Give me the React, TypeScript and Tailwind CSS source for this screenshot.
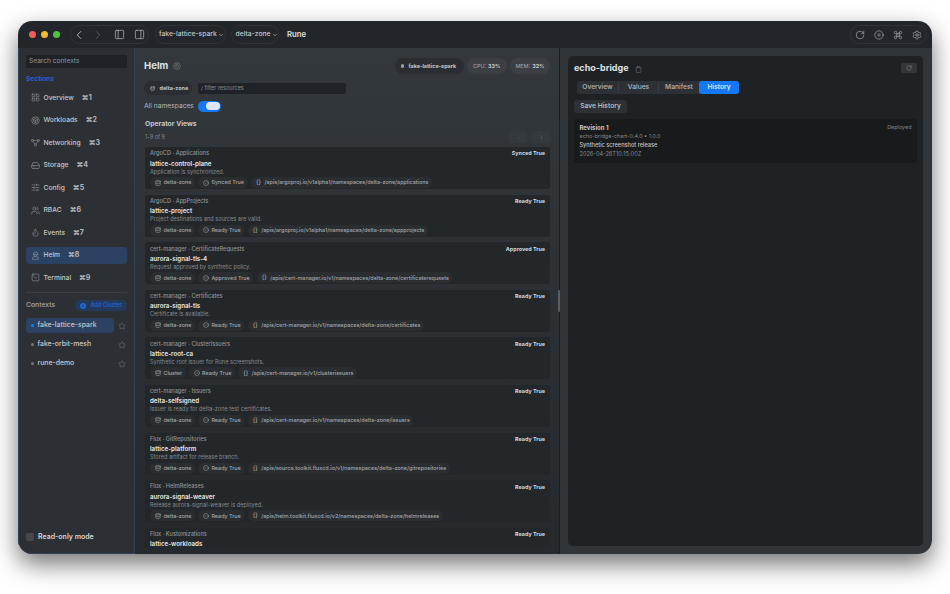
import {
  ChevronDown,
  ChevronLeft,
  ChevronRight,
  CircleCheck,
  CirclePause,
  Clipboard,
  Command,
  Database,
  Flame,
  HardDrive,
  LayoutGrid,
  PanelLeft,
  PanelRight,
  Plus,
  RotateCw,
  Settings,
  SlidersHorizontal,
  SquareTerminal,
  Star,
  Users,
} from "lucide-react";

type IconProps = { className?: string; strokeWidth?: number };

function WorkloadsIcon({ className, strokeWidth }: IconProps) {
  return (
    <svg viewBox="0 0 24 24" fill="none" stroke="currentColor" strokeWidth={strokeWidth} className={className}>
      <circle cx="12" cy="12" r="10" />
      <path d="M12 6l5.5 3v6L12 18l-5.5-3V9zM6.5 9l5.5 3 5.5-3M12 12v6" />
    </svg>
  );
}

function NetworkingIcon({ className, strokeWidth }: IconProps) {
  return (
    <svg viewBox="0 0 24 24" fill="none" stroke="currentColor" strokeWidth={strokeWidth} className={className}>
      <rect x="1.5" y="4" width="5" height="5" rx="1" />
      <rect x="17.5" y="4" width="5" height="5" rx="1" />
      <rect x="9.5" y="16" width="5" height="5" rx="1" />
      <path d="M6.5 6.5h11M5 9l6 7M19 9l-6 7" />
    </svg>
  );
}

function HelmIcon({ className, strokeWidth }: IconProps) {
  return (
    <svg viewBox="0 0 24 24" fill="none" stroke="currentColor" strokeWidth={strokeWidth} className={className}>
      <path d="M5 9h14M7 9l1-5.5a1 1 0 0 1 1-.5h6a1 1 0 0 1 1 .5L17 9" />
      <path d="M7.5 9.5a4.5 4.5 0 0 0 9 0" />
      <path d="M4 22v-2a5 5 0 0 1 5-5h6a5 5 0 0 1 5 5v2z" />
    </svg>
  );
}

function SpinCircleIcon({ className, strokeWidth }: IconProps) {
  return (
    <svg viewBox="0 0 24 24" fill="none" stroke="currentColor" strokeWidth={strokeWidth} className={className}>
      <circle cx="12" cy="12" r="10" />
      <path d="M15.5 7.5a5 5 0 1 0 1 6a3.5 3.5 0 0 0-7-1" />
    </svg>
  );
}

const navItems = [
  { label: "Overview", key: "⌘1", icon: LayoutGrid },
  { label: "Workloads", key: "⌘2", icon: WorkloadsIcon },
  { label: "Networking", key: "⌘3", icon: NetworkingIcon },
  { label: "Storage", key: "⌘4", icon: HardDrive },
  { label: "Config", key: "⌘5", icon: SlidersHorizontal },
  { label: "RBAC", key: "⌘6", icon: Users },
  { label: "Events", key: "⌘7", icon: Flame },
  { label: "Helm", key: "⌘8", icon: HelmIcon, active: true },
  { label: "Terminal", key: "⌘9", icon: SquareTerminal },
];

const contexts = [
  { name: "fake-lattice-spark", active: true },
  { name: "fake-orbit-mesh" },
  { name: "rune-demo" },
];

const views = [
  {
    kind: "ArgoCD · Applications",
    name: "lattice-control-plane",
    desc: "Application is synchronized.",
    status: "Synced True",
    ns: "delta-zone",
    path: "/apis/argoproj.io/v1alpha1/namespaces/delta-zone/applications",
  },
  {
    kind: "ArgoCD · AppProjects",
    name: "lattice-project",
    desc: "Project destinations and sources are valid.",
    status: "Ready True",
    ns: "delta-zone",
    path: "/apis/argoproj.io/v1alpha1/namespaces/delta-zone/appprojects",
  },
  {
    kind: "cert-manager · CertificateRequests",
    name: "aurora-signal-tls-4",
    desc: "Request approved by synthetic policy.",
    status: "Approved True",
    ns: "delta-zone",
    path: "/apis/cert-manager.io/v1/namespaces/delta-zone/certificaterequests",
  },
  {
    kind: "cert-manager · Certificates",
    name: "aurora-signal-tls",
    desc: "Certificate is available.",
    status: "Ready True",
    ns: "delta-zone",
    path: "/apis/cert-manager.io/v1/namespaces/delta-zone/certificates",
  },
  {
    kind: "cert-manager · ClusterIssuers",
    name: "lattice-root-ca",
    desc: "Synthetic root issuer for Rune screenshots.",
    status: "Ready True",
    ns: "Cluster",
    path: "/apis/cert-manager.io/v1/clusterissuers",
  },
  {
    kind: "cert-manager · Issuers",
    name: "delta-selfsigned",
    desc: "Issuer is ready for delta-zone test certificates.",
    status: "Ready True",
    ns: "delta-zone",
    path: "/apis/cert-manager.io/v1/namespaces/delta-zone/issuers",
  },
  {
    kind: "Flux · GitRepositories",
    name: "lattice-platform",
    desc: "Stored artifact for release branch.",
    status: "Ready True",
    ns: "delta-zone",
    path: "/apis/source.toolkit.fluxcd.io/v1/namespaces/delta-zone/gitrepositories",
  },
  {
    kind: "Flux · HelmReleases",
    name: "aurora-signal-weaver",
    desc: "Release aurora-signal-weaver is deployed.",
    status: "Ready True",
    ns: "delta-zone",
    path: "/apis/helm.toolkit.fluxcd.io/v2/namespaces/delta-zone/helmreleases",
  },
];

function Chip({ children }: { children: React.ReactNode }) {
  return (
    <span className="flex h-[11px] items-center gap-[2px] rounded-full bg-[#2a2e31] pr-[3.5px] pl-[5px] text-[5.4px] font-medium text-[#a4a8ac]">
      {children}
    </span>
  );
}

function CardHead({ kind, status, name }: { kind: string; status: string; name: string }) {
  return (
    <>
      <div className="flex h-[6px] items-center justify-between text-[5.6px] font-medium text-[#8f9397]">
        <span>{kind}</span>
        <span className="text-[5.4px] font-bold text-[#d4d6d8]">{status}</span>
      </div>
      <div className="mt-[3px] h-[7px] text-[6.2px] leading-[7px] font-semibold text-[#e8e9ea]">{name}</div>
    </>
  );
}

function ViewCard({ view }: { view: (typeof views)[number] }) {
  return (
    <div className="flex h-[42px] shrink-0 flex-col rounded-[3px] bg-[#23272a] px-[5px] pt-[3.5px]">
      <CardHead kind={view.kind} status={view.status} name={view.name} />
      <div className="mt-[2px] h-[7px] text-[5.6px] leading-[7px] text-[#85898d]">{view.desc}</div>
      <div className="mt-[1.5px] flex gap-[3.5px]">
        <Chip>
          <Database className="size-[6px]" />
          <span className="ml-[0.5px]">{view.ns}</span>
        </Chip>
        <Chip>
          <CircleCheck className="size-[6px]" />
          <span>{view.status}</span>
        </Chip>
        <Chip>
          <span className="w-[6px] text-[5.6px]">{"{}"}</span>
          <span className="ml-[0.5px]">{view.path}</span>
        </Chip>
      </div>
    </div>
  );
}

function Sidebar() {
  return (
    <aside className="flex w-[117px] shrink-0 flex-col border-r border-b border-l border-[#2f4257] bg-[#2c3035] px-[7px] pt-[7px] pb-[11px]">
      <div className="flex h-[13px] items-center rounded-[2px] bg-[#1f2327] px-[3px] text-[6.6px] text-[#8f9397]">
        Search contexts
      </div>
      <div className="mt-[7px] text-[6.6px] leading-[9px] font-bold text-[#1d63c9]">Sections</div>
      <nav className="mt-[5px] flex flex-col gap-[5px]">
        {navItems.map((item) => (
          <div
            key={item.label}
            className={`flex h-[17.5px] items-center rounded-[4px] pl-[4.5px] text-[6.7px] font-medium text-[#c4c7ca] ${
              item.active ? "bg-[#2c4263]" : ""
            }`}
          >
            <item.icon className="size-[9px] text-[#a1a5a9]" strokeWidth={1.4} />
            <span className="ml-[4px]">{item.label}</span>
            <span className="ml-[8px] text-[7px] font-bold text-[#b4b7ba]">{item.key}</span>
          </div>
        ))}
      </nav>
      <div className="mt-[5px] h-px bg-[#3a3e43]" />
      <div className="mt-[7px] flex h-[12px] items-center justify-between">
        <span className="text-[6.8px] font-medium text-[#a1a5a9]">Contexts</span>
        <span className="flex h-[11px] items-center gap-[5px] rounded-full bg-[#233a5c] px-[5px] text-[5.5px] font-semibold text-[#1d63c9]">
          <span className="flex size-[6px] items-center justify-center rounded-full bg-[#1d6ad9]">
            <Plus className="size-[4px] text-[#233a5c]" strokeWidth={3} />
          </span>
          Add Cluster
        </span>
      </div>
      <div className="mt-[6.5px] flex flex-col gap-[4px]">
        {contexts.map((ctx) => (
          <div key={ctx.name} className="flex items-center gap-[4px]">
            <div
              className={`flex h-[15px] w-[88px] items-center gap-[3.5px] rounded-[4px] pl-[4.5px] text-[6.9px] font-medium text-[#c4c7ca] ${
                ctx.active ? "bg-[#2c4263]" : ""
              }`}
            >
              <span className={`size-[3.5px] rounded-full ${ctx.active ? "bg-[#1d78f2]" : "bg-[#74787c]"}`} />
              {ctx.name}
            </div>
            <Star className="size-[8px] text-[#85898d]" strokeWidth={1.3} />
          </div>
        ))}
      </div>
      <div className="mt-auto flex items-center gap-[4px]">
        <span className="size-[8px] rounded-[2px] bg-[#44484c]" />
        <span className="text-[7px] font-semibold text-[#d4d6d8]">Read-only mode</span>
      </div>
    </aside>
  );
}

function TitleBar() {
  return (
    <header className="flex h-[27px] shrink-0 items-center bg-[#22262a] pr-[5px] pl-[10.5px] text-[#c4c7ca]">
      <div className="flex gap-[4.5px]">
        <span className="size-[7.5px] rounded-full bg-[#ed5f57]" />
        <span className="size-[7.5px] rounded-full bg-[#f2bb2f]" />
        <span className="size-[7.5px] rounded-full bg-[#4fc145]" />
      </div>
      <div className="ml-[10px] flex h-[19px] w-[79px] items-center rounded-full border border-[#2f3337] pl-[1px]">
        <ChevronLeft className="size-[14px] text-[#c4c7ca]" strokeWidth={1.5} />
        <ChevronRight className="ml-[5px] size-[14px] text-[#55595d]" strokeWidth={1.5} />
        <PanelLeft className="ml-[8.5px] size-[11px]" strokeWidth={1.4} />
        <PanelRight className="ml-[9px] size-[11px]" strokeWidth={1.4} />
      </div>
      <div className="ml-[6px] flex h-[19px] w-[71px] items-center gap-[1px] rounded-full border border-[#2f3337] pl-[3px] text-[6.75px] font-medium">
        fake-lattice-spark
        <ChevronDown className="size-[6px]" strokeWidth={2.5} />
      </div>
      <div className="ml-[5px] flex h-[19px] w-[48px] items-center gap-[1px] rounded-full border border-[#2f3337] pl-[3.5px] text-[6.75px] font-medium">
        delta-zone
        <ChevronDown className="size-[6px]" strokeWidth={2.5} />
      </div>
      <span className="ml-[8px] text-[7.7px] font-semibold text-[#dfe1e3]">Rune</span>
      <div className="ml-auto flex h-[19px] w-[77px] items-center gap-[9.3px] rounded-full border border-[#2f3337] pl-[3.5px] text-[#b4b7ba]">
        <RotateCw className="size-[10px]" strokeWidth={1.5} />
        <CirclePause className="size-[10px]" strokeWidth={1.5} />
        <Command className="size-[10px]" strokeWidth={1.5} />
        <Settings className="size-[10px]" strokeWidth={1.5} />
      </div>
    </header>
  );
}

function MainPane() {
  return (
    <main className="flex w-[424px] shrink-0 flex-col overflow-hidden bg-gradient-to-b from-[#33383d] to-[#25292d] px-[9px]">
      <div className="mt-[10px] flex h-[16px] shrink-0 items-center">
        <span className="text-[9.6px] font-bold text-[#dfe1e3]">Helm</span>
        <SpinCircleIcon className="ml-[5px] size-[8px] text-[#85898d]" strokeWidth={1.6} />
        <span className="ml-auto flex h-[16px] w-[69px] items-center gap-[4.5px] rounded-full bg-[#2a2e32] pl-[6px] text-[5.4px] font-bold text-[#c4c7ca]">
          <span className="size-[3.5px] rounded-full bg-[#9a9ea2]" />
          fake-lattice-spark
        </span>
        <span className="ml-[3.5px] flex h-[16px] w-[39.5px] items-center justify-center rounded-full bg-[#3c4045] text-[5.4px] font-bold text-[#c4c7ca]">
          <span className="mr-[2px] font-medium text-[#9a9ea2]">CPU:</span>33%
        </span>
        <span className="ml-[3.5px] flex h-[16px] w-[40px] items-center justify-center rounded-full bg-[#3c4045] text-[5.4px] font-bold text-[#c4c7ca]">
          <span className="mr-[2px] font-medium text-[#9a9ea2]">MEM:</span>32%
        </span>
      </div>
      <div className="mt-[7px] flex h-[14px] shrink-0 items-center">
        <span className="flex h-[14px] w-[48px] items-center gap-[4.5px] rounded-full bg-[#2a2e32] pl-[6px] text-[5.4px] font-bold text-[#c4c7ca]">
          <Database className="size-[5px]" />
          delta-zone
        </span>
        <span className="ml-[6px] flex h-[11px] w-[148px] items-center rounded-[2px] bg-[#1f2327] px-[3px] text-[5.5px] text-[#85898d]">
          / filter resources
        </span>
      </div>
      <div className="mt-[6px] flex h-[10.5px] shrink-0 items-center">
        <span className="text-[6.7px] text-[#b4b7ba]">All namespaces</span>
        <span className="ml-[4.5px] flex h-[10.5px] w-[23px] items-center justify-end rounded-full bg-[#1478f5] pr-[1px]">
          <span className="h-[8px] w-[14px] rounded-full bg-[#dbe6f7]" />
        </span>
      </div>
      <div className="mt-[7px] ml-px h-[9px] shrink-0 text-[6.8px] leading-[9px] font-bold text-[#c4c7ca]">
        Operator Views
      </div>
      <div className="mt-[3.5px] ml-px flex h-[12px] shrink-0 items-center justify-between text-[5.5px] text-[#85898d]">
        1-9 of 9
        <div className="flex gap-[5px]">
          <span className="flex h-[12px] w-[18px] items-center justify-center rounded-[2px] bg-[#34393e]">
            <ChevronLeft className="size-[7px] text-[#55595d]" />
          </span>
          <span className="flex h-[12px] w-[18px] items-center justify-center rounded-[2px] bg-[#34393e]">
            <ChevronRight className="size-[7px] text-[#6a6e72]" />
          </span>
        </div>
      </div>
      <div className="mt-[4px] ml-px flex flex-col gap-[5.6px]">
        {views.map((view) => (
          <ViewCard key={view.name} view={view} />
        ))}
        <div className="flex h-[19px] shrink-0 flex-col rounded-t-[3px] bg-[#23272a] px-[5px] pt-[3.5px]">
          <CardHead kind="Flux · Kustomizations" status="Ready True" name="lattice-workloads" />
        </div>
      </div>
    </main>
  );
}

function DetailPane() {
  return (
    <section className="relative flex flex-1 border-l border-[#1b1e21] bg-[#30353a] pt-[8px] pr-[9px] pb-[8px] pl-[8px]">
      <span className="absolute top-[242px] -left-[2px] h-[22px] w-[2px] rounded-full bg-[#5a5e62]" />
      <div className="flex flex-1 flex-col rounded-[5px] bg-[#1f2225] px-[6px] pt-[5.5px]">
        <div className="flex h-[13px] items-center">
          <span className="text-[9px] font-bold text-[#dfe1e3]">echo-bridge</span>
          <Clipboard className="mt-[2px] ml-[6px] size-[7px] text-[#85898d]" strokeWidth={1.5} />
          <span className="ml-auto flex h-[10px] w-[16px] items-center justify-center rounded-[2px] bg-[#33373b]">
            <RotateCw className="size-[6px] text-[#a1a5a9]" strokeWidth={1.5} />
          </span>
        </div>
        <div className="mt-[6.5px] ml-[3px] flex h-[13px] w-[162px] items-center rounded-[3px] bg-[#2d3135] text-[6.7px] font-medium text-[#b4b7ba]">
          <span className="w-[41px] text-center">Overview</span>
          <span className="w-[40px] border-l border-[#3a3e43] text-center">Values</span>
          <span className="w-[41px] border-l border-[#3a3e43] text-center">Manifest</span>
          <span className="flex h-[13px] w-[40px] items-center justify-center rounded-[3px] bg-[#1478f5] text-[#e8eef8]">
            History
          </span>
        </div>
        <div className="mt-[6px] flex h-[13px] w-[53px] items-center justify-center rounded-[3px] bg-[#2d3135] text-[6.7px] font-medium text-[#c4c7ca]">
          Save History
        </div>
        <div className="mt-[5.5px] flex h-[44px] flex-col rounded-[3px] bg-[#181a1c] px-[5.5px] pt-[4px] text-[5.45px] leading-[9px]">
          <div className="flex justify-between">
            <span className="text-[6px] font-bold text-[#c4c7ca]">Revision 1</span>
            <span className="text-[#85898d]">Deployed</span>
          </div>
          <span className="text-[#85898d]">echo-bridge-chart-0.4.0 • 1.0.0</span>
          <span className="text-[5.6px] font-medium text-[#c4c7ca]">Synthetic screenshot release</span>
          <span className="text-[5.6px] text-[#85898d]">2026-04-26T10:15:00Z</span>
        </div>
      </div>
    </section>
  );
}

export default function App() {
  return (
    <div className="h-[594px] w-[950px] overflow-hidden bg-white px-[18px] pt-[21px] font-['Inter',sans-serif]">
      <div className="flex h-[533px] w-[914px] flex-col overflow-hidden rounded-[14px] shadow-[0_10px_24px_rgba(0,0,0,0.55)]">
        <TitleBar />
        <div className="flex min-h-0 flex-1">
          <Sidebar />
          <MainPane />
          <DetailPane />
        </div>
      </div>
    </div>
  );
}
